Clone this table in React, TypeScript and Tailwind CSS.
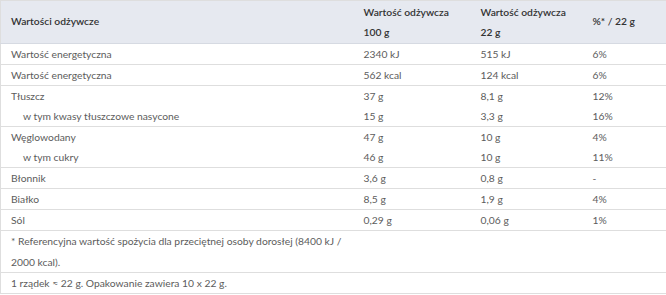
const rows: { name: string; v100: string; v22: string; pct: string; sub?: boolean; last?: boolean }[] = [
  { name: "Wartość energetyczna", v100: "2340 kJ", v22: "515 kJ", pct: "6%", last: true },
  { name: "Wartość energetyczna", v100: "562 kcal", v22: "124 kcal", pct: "6%", last: true },
  { name: "Tłuszcz", v100: "37 g", v22: "8,1 g", pct: "12%" },
  { name: "w tym kwasy tłuszczowe nasycone", v100: "15 g", v22: "3,3 g", pct: "16%", sub: true, last: true },
  { name: "Węglowodany", v100: "47 g", v22: "10 g", pct: "4%" },
  { name: "w tym cukry", v100: "46 g", v22: "10 g", pct: "11%", sub: true, last: true },
  { name: "Błonnik", v100: "3,6 g", v22: "0,8 g", pct: "-", last: true },
  { name: "Białko", v100: "8,5 g", v22: "1,9 g", pct: "4%", last: true },
  { name: "Sól", v100: "0,29 g", v22: "0,06 g", pct: "1%", last: true },
];

export default function App() {
  return (
    <div className="w-[666px] h-[295px] bg-white font-['Lato',sans-serif] text-[10.3px] text-[#5c5c5c]">
      <table className="w-full table-fixed border-collapse border-t border-l border-[#dedede]">
        <colgroup>
          <col className="w-[353px]" />
          <col className="w-[117px]" />
          <col className="w-[112px]" />
          <col />
        </colgroup>
        <thead>
          <tr className="bg-[#e6e9f0] border-b border-[#d6dae2] text-[#333] h-[43px]">
            <th className="text-left font-semibold pl-[10px] align-middle">Wartości odżywcze</th>
            <th className="text-left font-semibold pl-[10px] leading-[20px]">
              Wartość odżywcza
              <br />
              100 g
            </th>
            <th className="text-left font-semibold pl-[10px] leading-[20px]">
              Wartość odżywcza
              <br />
              22 g
            </th>
            <th className="text-left font-semibold pl-[10px] align-middle">%* / 22 g</th>
          </tr>
        </thead>
        <tbody>
          {rows.map((r, i) => (
            <tr key={i} className={r.last ? "border-b border-[#dedede]" : ""}>
              <td className={`leading-[20px] ${r.sub ? "pl-[22px]" : "pl-[10px]"}`}>{r.name}</td>
              <td className="leading-[20px] pl-[10px]">{r.v100}</td>
              <td className="leading-[20px] pl-[10px]">{r.v22}</td>
              <td className="leading-[20px] pl-[10px]">{r.pct}</td>
            </tr>
          ))}
          <tr className="border-b border-[#dedede]">
            <td className="leading-[20.5px] pl-[10px]">
              * Referencyjna wartość spożycia dla przeciętnej osoby dorosłej (8400 kJ / 2000 kcal).
            </td>
            <td />
            <td />
            <td />
          </tr>
          <tr className="border-b border-[#dedede]">
            <td className="leading-[20px] pl-[10px]">1 rządek ≈ 22 g. Opakowanie zawiera 10 x 22 g.</td>
            <td />
            <td />
            <td />
          </tr>
        </tbody>
      </table>
    </div>
  );
}
